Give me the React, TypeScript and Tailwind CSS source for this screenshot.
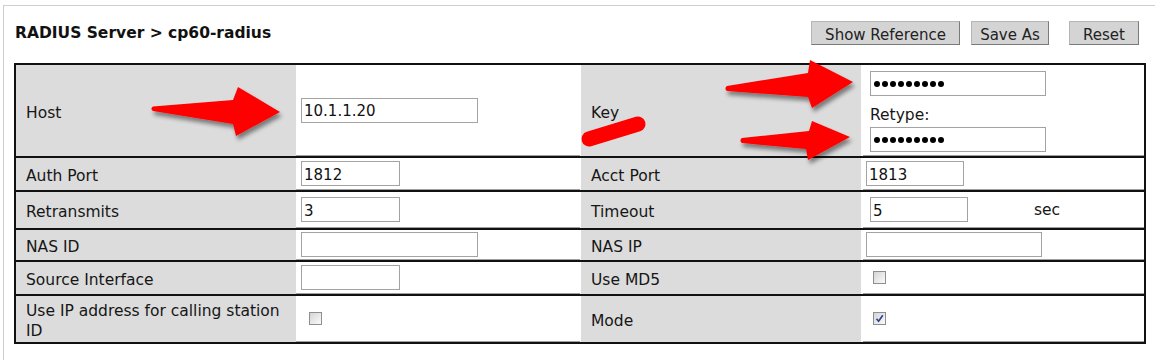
import React from "react";

const FONT = { fontFamily: '"DejaVu Sans", Verdana, sans-serif' };

function Input({ value = "", w }: { value?: string; w: string }) {
  return (
    <input
      readOnly
      value={value}
      className={`${w} h-[25px] border border-[#a3a3a3] bg-white px-[2px] pt-[2px] text-[15px] text-[#111] outline-none`}
      style={FONT}
    />
  );
}

function Dots() {
  return (
    <div className="w-[176px] h-[25px] border border-[#a3a3a3] bg-white flex items-center gap-[2px] pl-[3px]">
      {Array.from({ length: 9 }).map((_, i) => (
        <span key={i} className="w-[6px] h-[6px] rounded-full bg-black" />
      ))}
    </div>
  );
}

function Check({ checked = false }: { checked?: boolean }) {
  return (
    <span className="relative inline-block w-[13px] h-[13px] border border-[#8e8e8e] bg-gradient-to-br from-[#d4d4d4] to-[#fbfbfb]">
      {checked && (
        <svg className="absolute left-[1px] top-[1px]" width="9" height="9" viewBox="0 0 9 9">
          <path d="M1.5 4.8 L3.6 7.2 L7.8 1.2" fill="none" stroke="#2b3f8f" strokeWidth="1.6" />
        </svg>
      )}
    </span>
  );
}

function Label({ children }: { children: React.ReactNode }) {
  return (
    <div className="w-[280px] shrink-0 bg-[#dcdcdc] pl-[10px] pr-[8px] pt-[4px] flex items-center leading-[20px] text-[15.5px]">
      {children}
    </div>
  );
}

function Val1({ children, pl = "pl-[5px]" }: { children?: React.ReactNode; pl?: string }) {
  return (
    <>
      <div className={`w-[284px] shrink-0 border-b border-[#a0a0a0] ${pl} flex items-center`}>{children}</div>
      <div className="w-[1px] shrink-0" />
    </>
  );
}

function Val2({ children, pl = "pl-[3px]" }: { children?: React.ReactNode; pl?: string }) {
  return (
    <div className={`flex-1 ml-[2px] border-b border-[#a0a0a0] ${pl} flex items-center`}>{children}</div>
  );
}

export default function App() {
  return (
    <div className="relative w-[1155px] h-[360px] overflow-hidden bg-white text-[15px] text-[#161616]" style={FONT}>
      <div className="ml-[3px] mt-[5px] h-[355px] border-l border-t border-[#cfcfcf]">
        <div className="flex items-center h-[24px] mt-[15px] pl-[11px] pr-[16px]">
          <div className="font-bold text-[15.5px] text-[#111] pt-[2px]">RADIUS Server &gt; cp60-radius</div>
          <div className="flex-1" />
          <button className="w-[149px] h-[24px] pt-[2px] bg-[#d4d4d4] border border-[#b5b5b5] border-r-[#7a7a7a] border-b-[#7a7a7a] text-[15px] text-[#222]">
            Show Reference
          </button>
          <button className="ml-[11px] w-[78px] h-[24px] pt-[2px] bg-[#d4d4d4] border border-[#b5b5b5] border-r-[#7a7a7a] border-b-[#7a7a7a] text-[15px] text-[#222]">
            Save As
          </button>
          <button className="ml-[20px] w-[70px] h-[24px] pt-[2px] bg-[#d4d4d4] border border-[#b5b5b5] border-r-[#7a7a7a] border-b-[#7a7a7a] text-[15px] text-[#222]">
            Reset
          </button>
        </div>

        <div className="ml-[10px] mt-[18px] w-[1132px] border-2 border-[#111]">
          <div className="flex h-[91px]">
            <Label>Host</Label>
            <Val1>
              <Input value="10.1.1.20" w="w-[177px]" />
            </Val1>
            <Label>Key</Label>
            <div className="flex-1 ml-[2px] border-b border-[#a0a0a0] pl-[7px] pt-[6px] flex flex-col items-start">
              <Dots />
              <div className="mt-[10px] leading-[18px] h-[18px] text-[15.5px]">Retype:</div>
              <div className="mt-[3px]">
                <Dots />
              </div>
            </div>
          </div>

          <div className="flex h-[34px] border-t-2 border-[#111]">
            <Label>Auth Port</Label>
            <Val1>
              <Input value="1812" w="w-[99px]" />
            </Val1>
            <Label>Acct Port</Label>
            <Val2>
              <Input value="1813" w="w-[98px]" />
            </Val2>
          </div>

          <div className="flex h-[38px] border-t-2 border-[#111]">
            <Label>Retransmits</Label>
            <Val1>
              <Input value="3" w="w-[99px]" />
            </Val1>
            <Label>Timeout</Label>
            <Val2 pl="pl-[7px]">
              <Input value="5" w="w-[98px]" />
              <span className="ml-[66px] pt-[2px] text-[15.5px]">sec</span>
            </Val2>
          </div>

          <div className="flex h-[32px] border-t-2 border-[#111]">
            <Label>NAS ID</Label>
            <Val1>
              <Input w="w-[177px]" />
            </Val1>
            <Label>NAS IP</Label>
            <Val2>
              <Input w="w-[176px]" />
            </Val2>
          </div>

          <div className="flex h-[34px] border-t-2 border-[#111]">
            <Label>Source Interface</Label>
            <Val1>
              <Input w="w-[99px]" />
            </Val1>
            <Label>Use MD5</Label>
            <Val2 pl="pl-[10px]">
              <Check />
            </Val2>
          </div>

          <div className="flex h-[48px] border-t-2 border-[#111]">
            <Label>Use IP address for calling station ID</Label>
            <Val1 pl="pl-[13px]">
              <Check />
            </Val1>
            <Label>Mode</Label>
            <Val2 pl="pl-[10px]">
              <Check checked />
            </Val2>
          </div>
        </div>
      </div>

      <svg className="absolute left-0 top-0 pointer-events-none" width="1155" height="360" viewBox="0 0 1155 360">
        <defs>
          <filter id="sh" x="-20%" y="-40%" width="140%" height="180%">
            <feDropShadow dx="2" dy="4" stdDeviation="2.2" floodColor="#000" floodOpacity="0.45" />
          </filter>
        </defs>
        <g fill="#ff0000" filter="url(#sh)">
          <path d="M153,106.5 C151,107.5 151,110 153,111 L233,124 L236,136 L280,112 L238,87 L233,100 Z" />
          <path d="M727,86 C725,87 725,90 727,91 L808,97 L812,108 L853,82 L810,60 L808,73 Z" />
          <path d="M742,138 C740,139 740,142 742,143 L806,149 L808,160 L850,137 L812,121 L809,131 Z" />
        </g>
        <line x1="589" y1="139" x2="638" y2="124" stroke="#ff0000" strokeWidth="15" strokeLinecap="round" />
      </svg>
    </div>
  );
}
